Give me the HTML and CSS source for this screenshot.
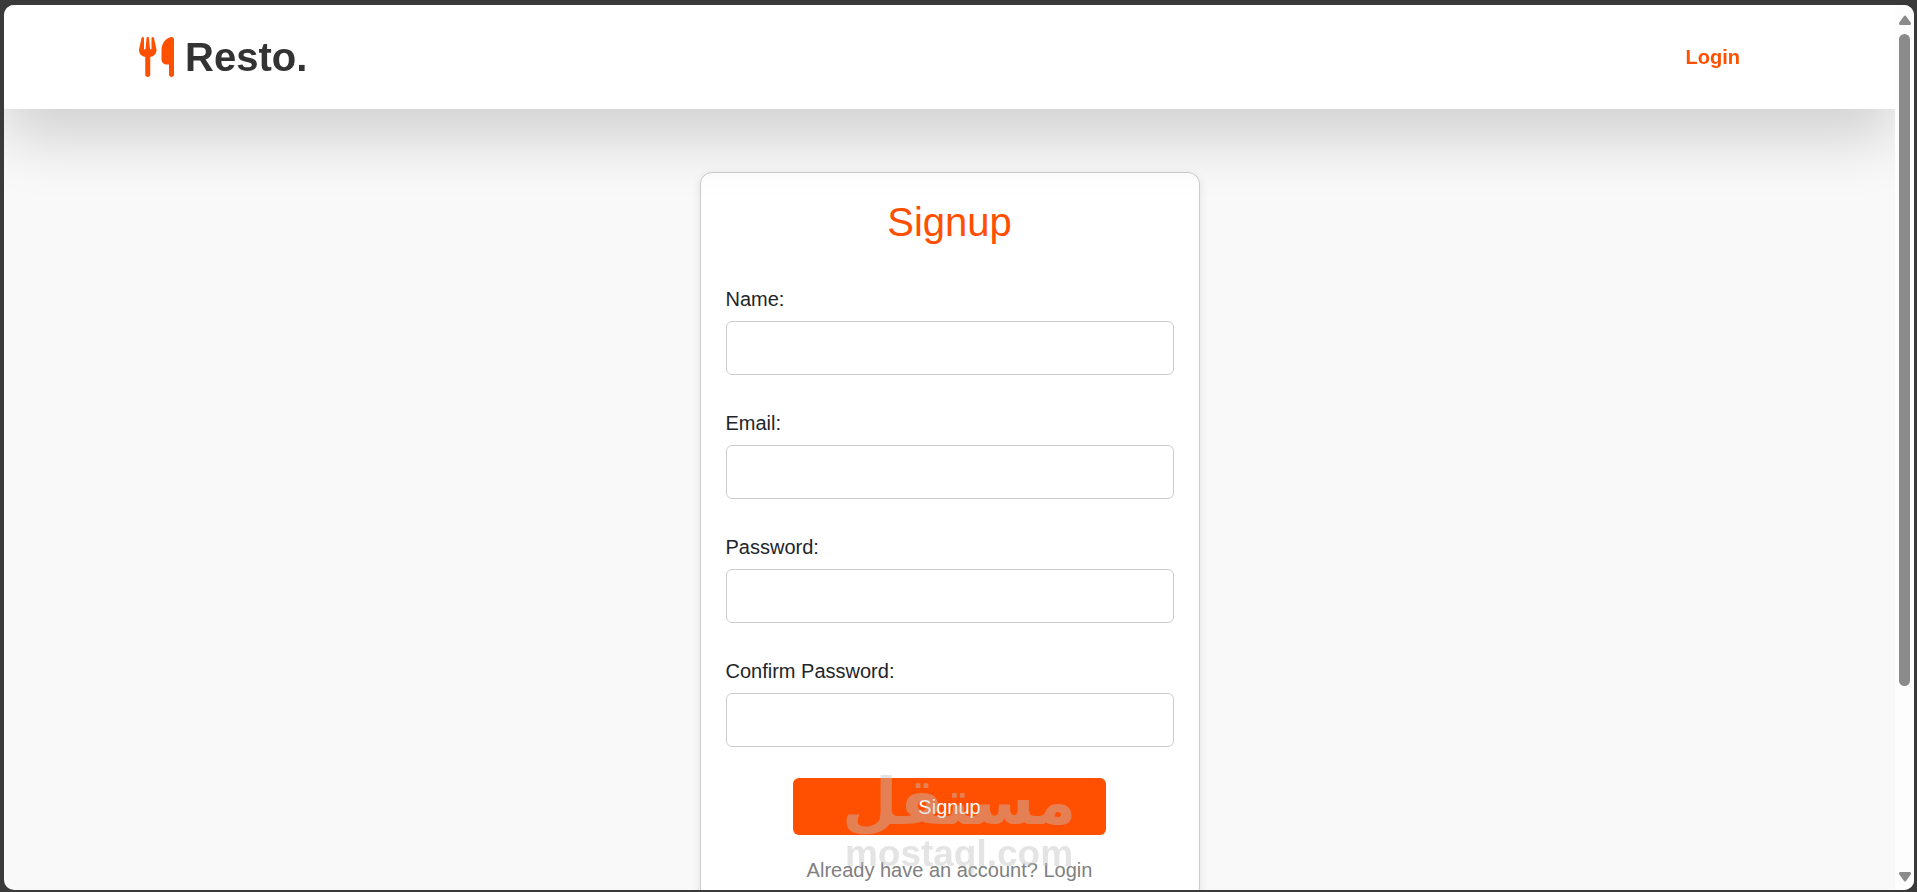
FILE: index.html
```html
<!DOCTYPE html>
<html lang="en">

<head>
    <meta charset="UTF-8">
    <meta name="viewport" content="width=device-width, initial-scale=1.0">
    <title>Resto. | Signup</title>
    <link rel="stylesheet" href="styles.css">
</head>

<body>

    <div class="window">
        <div class="page">
            <header class="header">
                <a class="logo" href="index.html">
                    <svg class="logo-icon" viewBox="0 0 448 512" aria-hidden="true">
                        <path d="M416 0C400 0 288 32 288 176V288c0 35.3 28.7 64 64 64h32V480c0 17.7 14.3 32 32 32s32-14.3 32-32V352 240 32c0-17.7-14.3-32-32-32zM64 16C64 7.8 57.9 1 49.7 .1S34.2 4.6 32.4 12.5L2.1 148.8C.7 155.1 0 161.5 0 167.9c0 45.9 35.1 83.6 80 87.7V480c0 17.7 14.3 32 32 32s32-14.3 32-32V255.6c44.9-4.1 80-41.8 80-87.7c0-6.4-.7-12.8-2.1-19.1L191.6 12.5c-1.8-8-9.3-13.3-17.4-12.4S160 7.8 160 16V150.2c0 5.4-4.4 9.8-9.8 9.8c-5.1 0-9.3-3.9-9.8-9L127.9 14.6C127.2 6.3 120.3 0 112 0s-15.2 6.3-15.9 14.6L83.7 151c-.5 5.1-4.7 9-9.8 9c-5.4 0-9.8-4.4-9.8-9.8V16z"/>
                    </svg>
                    Resto.
                </a>
                <nav class="navbar">
                    <a class="nav-link" href="login.html">Login</a>
                </nav>
            </header>

            <main class="main">
                <form class="card">
                    <h1 class="title">Signup</h1>
                    <div class="form-group">
                        <label for="name">Name:</label>
                        <input type="text" id="name" name="name" required>
                    </div>
                    <div class="form-group">
                        <label for="email">Email:</label>
                        <input type="email" id="email" name="email" required>
                    </div>
                    <div class="form-group">
                        <label for="password">Password:</label>
                        <input type="password" id="password" name="password" required>
                    </div>
                    <div class="form-group">
                        <label for="confirm-password">Confirm Password:</label>
                        <input type="password" id="confirm-password" name="confirm-password" required>
                    </div>
                    <button type="submit" class="btn">Signup</button>
                    <a class="login-link" href="login.html">Already have an account? Login</a>
                </form>
            </main>
        </div>

        <div class="scrollbar" aria-hidden="true">
            <svg class="arrow" viewBox="0 0 12 10"><path d="M5 1Q6 0 7 1L12 8Q12 10 11 10H1Q0 10 0 8Z"/></svg>
            <div class="track">
                <div class="thumb"></div>
            </div>
            <svg class="arrow" viewBox="0 0 12 10"><path d="M5 9Q6 10 7 9L12 2Q12 0 11 0H1Q0 0 0 2Z"/></svg>
        </div>

        <div class="watermark">
            <span class="watermark-ar" lang="ar" dir="rtl">مستقل</span>
            <span class="watermark-en">mostaql.com</span>
        </div>
    </div>

</body>

</html>
```

FILE: styles.css
```css
* {
    margin: 0;
    padding: 0;
    box-sizing: border-box;
}

body {
    font-family: Arial, "Liberation Sans", sans-serif;
    font-size: 20px;
    line-height: 30px;
    color: #212529;
    background-color: #3a3a3a;
    height: 100vh;
    padding: 5px 3px 2px 4px;
    overflow: hidden;
}

a {
    text-decoration: none;
}

.window {
    position: relative;
    display: flex;
    height: 100%;
    border-radius: 10px;
    background-color: #f9f9f9;
    overflow: hidden;
}

.page {
    flex: 1;
    overflow-y: auto;
    scrollbar-width: none;
}

/* header */
.header {
    position: sticky;
    top: 0;
    z-index: 10;
    display: flex;
    justify-content: space-between;
    align-items: center;
    padding: 22px 135px;
    background-color: #fff;
    box-shadow: 0 30px 60px rgba(0, 0, 0, 0.16);
}

.logo {
    display: flex;
    align-items: center;
    gap: 11px;
    font-size: 40px;
    line-height: 60px;
    font-weight: bold;
    color: #333;
}

.logo-icon {
    width: 35px;
    height: 40px;
    fill: #ff4f00;
}

.nav-link {
    padding: 10px 20px;
    font-weight: bold;
    color: #ff4f00;
}

/* signup form */
.main {
    display: flex;
    justify-content: center;
    padding: 63px 20px;
}

.card {
    display: flex;
    flex-direction: column;
    width: 100%;
    max-width: 500px;
    padding: 21px 25px 200px;
    background-color: #fff;
    border: 1px solid #ccc;
    border-radius: 12px;
    box-shadow: 0 3px 10px rgba(0, 0, 0, 0.1);
}

.title {
    margin-bottom: 34px;
    font-size: 40px;
    line-height: 56px;
    font-weight: normal;
    text-align: center;
    color: #ff4f00;
}

.form-group {
    display: flex;
    flex-direction: column;
    gap: 7px;
    margin-bottom: 33px;
}

.form-group:last-of-type {
    margin-bottom: 31px;
}

.form-group input {
    width: 100%;
    height: 54px;
    padding: 12px;
    font: inherit;
    border: 1px solid #ccc;
    border-radius: 6px;
    outline: none;
}

.form-group input:focus {
    border-color: #ff4f00;
}

.btn {
    align-self: center;
    width: 70%;
    height: 57px;
    margin-bottom: 20px;
    font: inherit;
    color: #fff;
    background-color: #ff4f00;
    border: none;
    border-radius: 6px;
    cursor: pointer;
}

.login-link {
    text-align: center;
    color: #808080;
}

/* scrollbar */
.scrollbar {
    display: flex;
    flex-direction: column;
    align-items: center;
    gap: 9px;
    width: 19px;
    padding: 10px 0 8px;
    background-color: #fdfdfd;
}

.arrow {
    width: 12px;
    height: 10px;
    fill: #8b8b8b;
}

.track {
    flex: 1;
}

.thumb {
    width: 11px;
    height: 78.6%;
    border-radius: 6px;
    background-color: #8b8b8b;
}

/* watermark over the page */
.watermark {
    position: absolute;
    left: 50%;
    bottom: 16px;
    z-index: 20;
    display: flex;
    flex-direction: column;
    align-items: center;
    transform: translateX(-50%);
    font-weight: bold;
    color: #c0c0c0;
    opacity: 0.43;
    pointer-events: none;
}

.watermark-ar {
    font-family: "DejaVu Sans", sans-serif;
    font-size: 64px;
    line-height: 64px;
}

.watermark-en {
    font-size: 37px;
    line-height: 40px;
}
```
